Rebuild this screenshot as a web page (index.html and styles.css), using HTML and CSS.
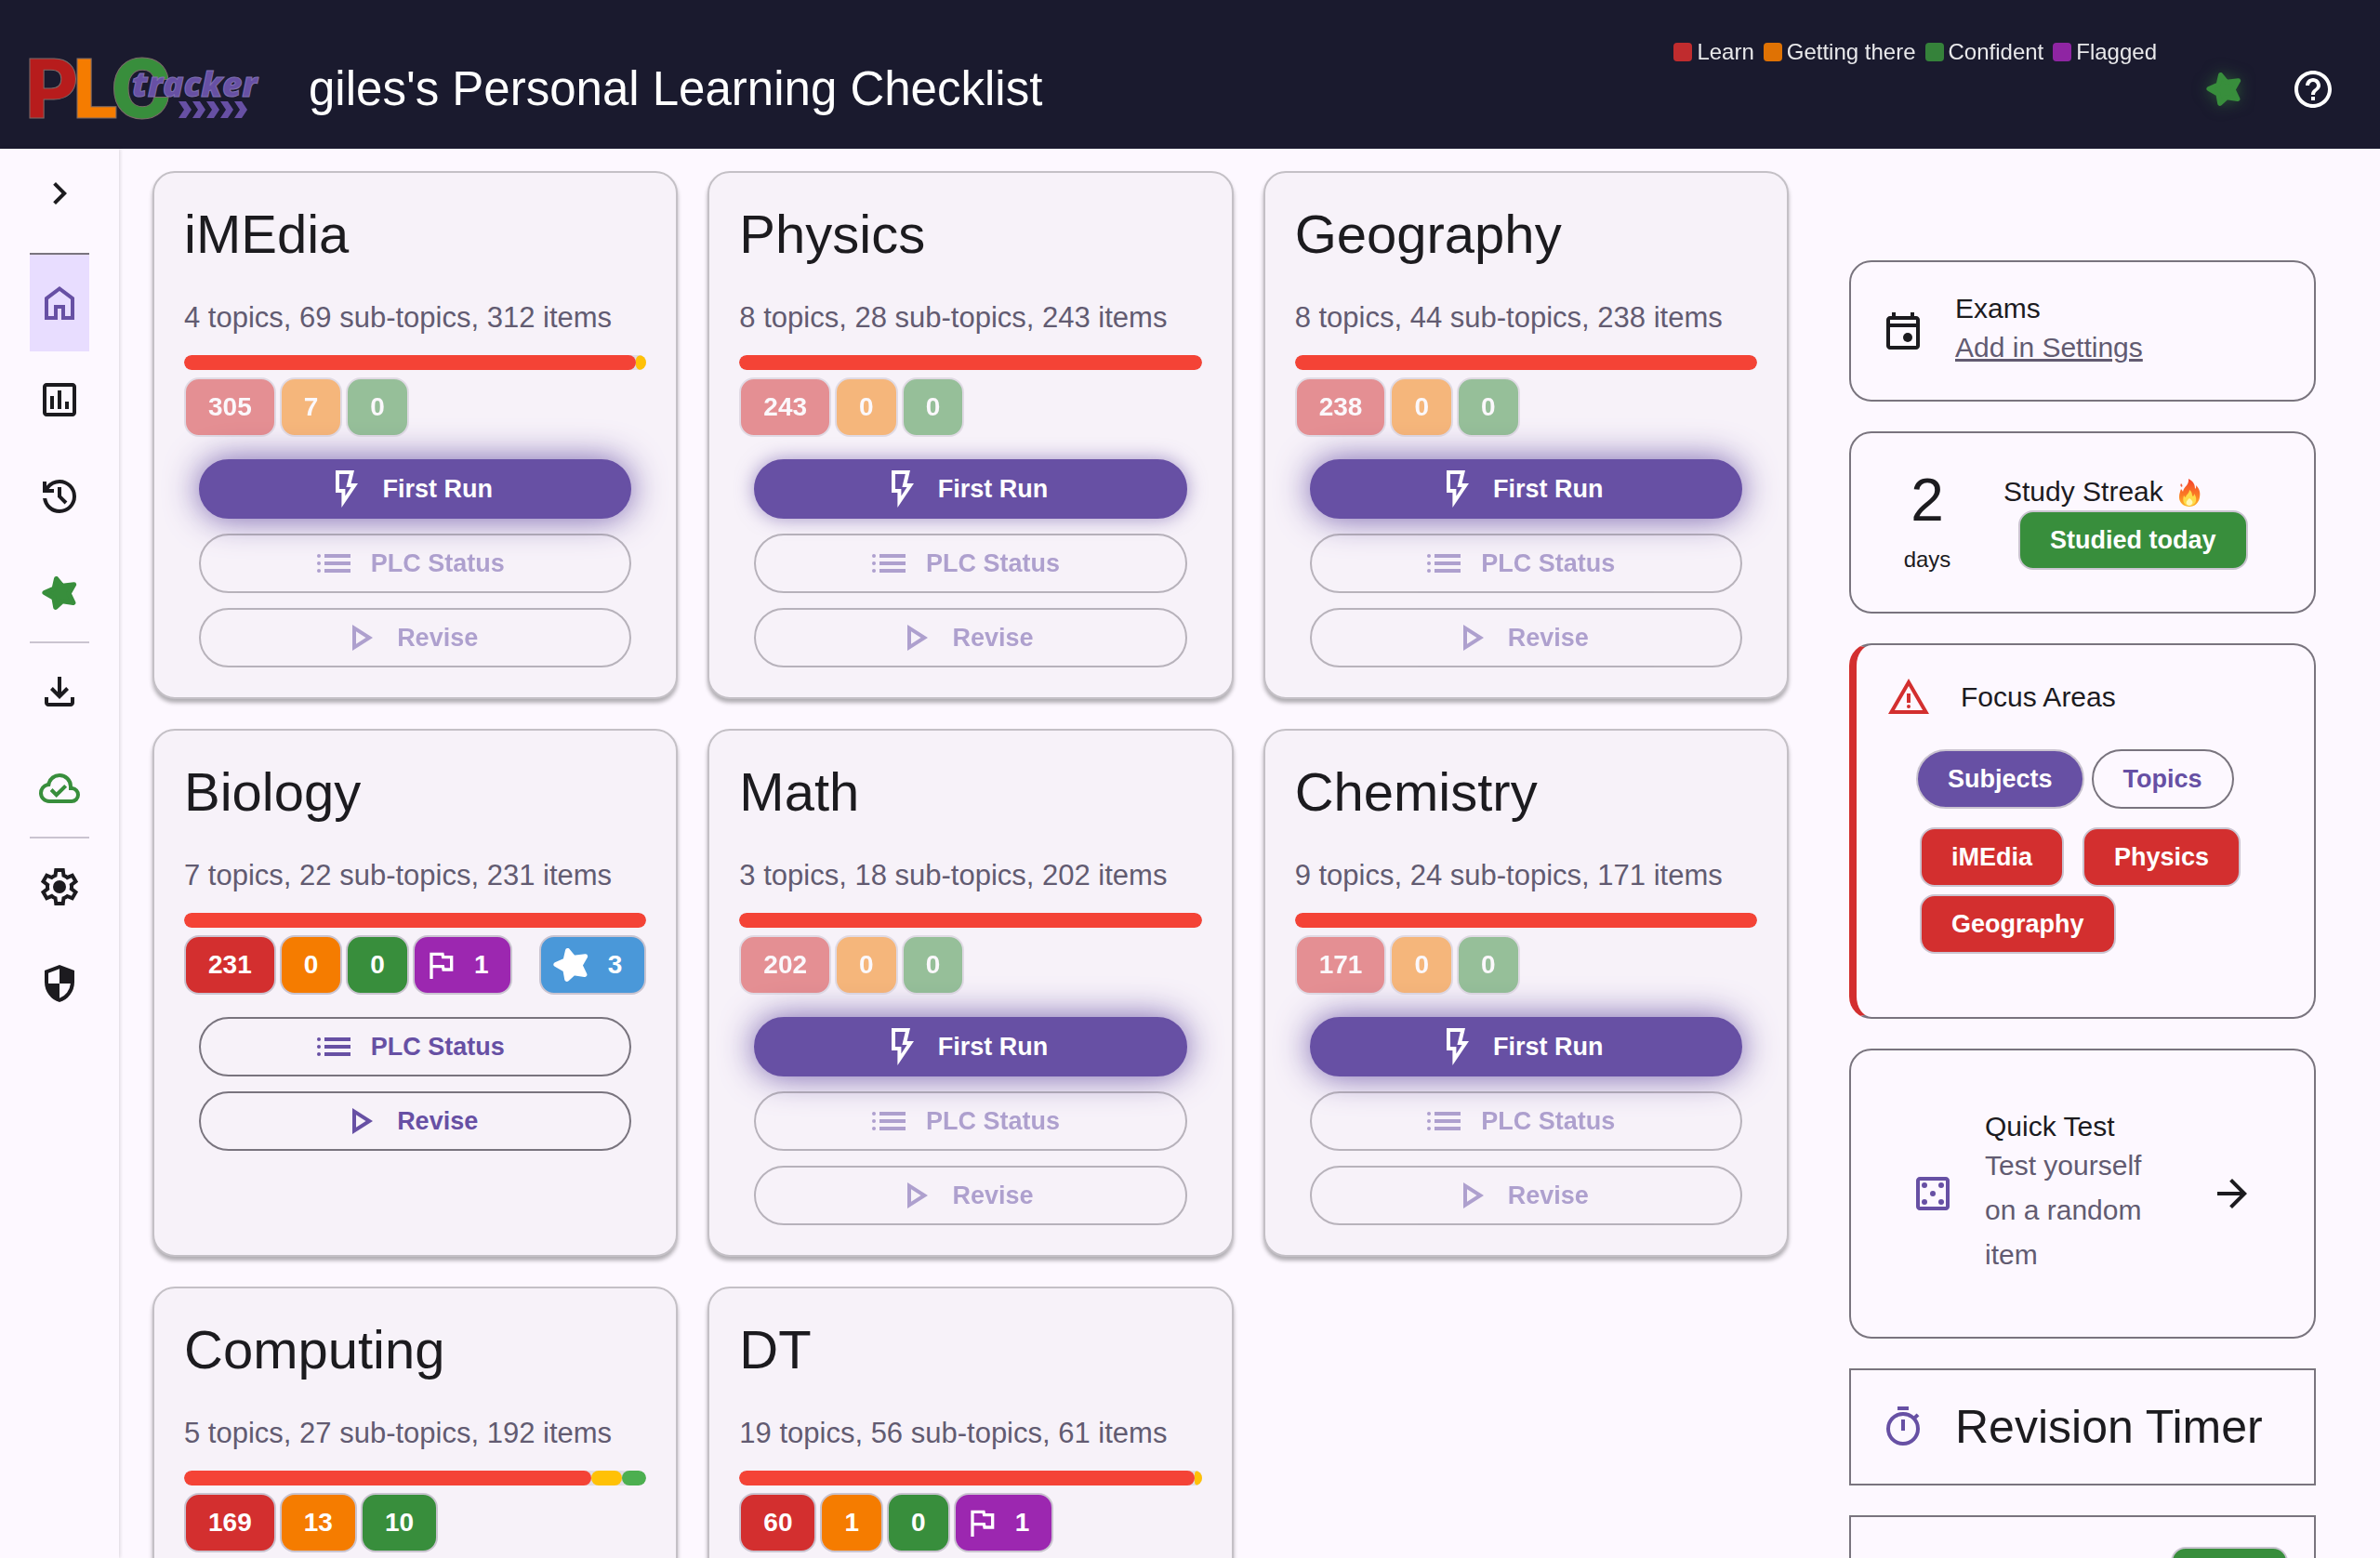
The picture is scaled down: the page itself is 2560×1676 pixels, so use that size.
FILE: index.html
```html
<!DOCTYPE html>
<html lang="en">
<head>
    <meta charset="UTF-8">
    <meta name="viewport" content="width=device-width, initial-scale=1.0">
    <title>PLC Tracker</title>
    <link rel="stylesheet" href="styles.css">
</head>
<body>

    <!-- Icon sprite -->
    <svg class="sprite" aria-hidden="true">
        <symbol id="i-chevron" viewBox="0 0 24 24"><path d="M8.6 16.6 13.2 12 8.6 7.4 10 6l6 6-6 6z"/></symbol>
        <symbol id="i-home" viewBox="0 0 24 24"><path d="M6 19h3v-6h6v6h3v-9l-6-4.5L6 10zm-2 2V9l8-6 8 6v12h-7v-6h-2v6z"/></symbol>
        <symbol id="i-chart" viewBox="0 0 24 24"><path d="M7 17h2v-7H7zm4 0h2V7h-2zm4 0h2v-4h-2zM5 21q-.8 0-1.4-.6T3 19V5q0-.8.6-1.4T5 3h14q.8 0 1.400.6T21 5v14q0 .8-.6 1.4T19 21zm0-2h14V5H5z"/></symbol>
        <symbol id="i-history" viewBox="0 0 24 24"><path d="M12 21q-3.450 0-6.013-2.287T3.050 13H5.100q.35 2.600 2.313 4.300T12 19q2.925 0 4.963-2.037T19 12q0-2.925-2.037-4.963T12 5q-1.725 0-3.225.8T6.250 8H9v2H3V4h2v2.350q1.275-1.600 3.113-2.475T12 3q1.875 0 3.513.713t2.850 1.924 1.925 2.850T21 12q0 1.875-.712 3.513t-1.925 2.850-2.850 1.925T12 21m2.800-4.800L11 12.400V7h2v4.600l3.200 3.200z"/></symbol>
        <symbol id="i-star" viewBox="0 0 24 24"><path d="M10.300 4.300 13.500 8.200 19.800 7.400 17 12.200 19.400 17.200 13.600 16.300 9.900 19.600 9 14.600 4 11.800 9.100 9.500z" stroke="currentColor" stroke-width="2.600" stroke-linejoin="round"/></symbol>
        <symbol id="i-download" viewBox="0 0 24 24"><path d="m12 16-5-5 1.400-1.450 2.600 2.600V4h2v8.150l2.600-2.600L17 11zm-6 4q-.8 0-1.400-.6T4 18v-3h2v3h12v-3h2v3q0 .8-.6 1.400T18 20z"/></symbol>
        <symbol id="i-cloud" viewBox="0 0 24 24"><path d="m10.350 17 5.700-5.650-1.450-1.400-4.250 4.200-2.100-2.100L6.850 13.500zM6.500 20q-2.275 0-3.887-1.575T1 14.575q0-1.950 1.175-3.475T5.250 9.150q.625-2.300 2.500-3.725T12 4q2.925 0 4.963 2.038T19 11q1.725.2 2.863 1.488T23 15.500q0 1.875-1.312 3.188T18.500 20zm0-2h12q1.050 0 1.775-.725T21 15.500t-.725-1.775T18.500 13H17v-2q0-2.075-1.463-3.537T12 6 8.463 7.463 7 11h-.5q-1.450 0-2.475 1.025T3 14.500t1.025 2.475T6.500 18"/></symbol>
        <symbol id="i-settings" viewBox="0 0 24 24"><path fill-rule="evenodd" d="m9.250 22-.4-3.200q-.325-.125-.612-.3t-.563-.375L4.700 19.375l-2.750-4.750 2.575-1.950Q4.500 12.500 4.500 12.338v-.675q0-.163.025-.338L1.950 9.375l2.750-4.750 2.975 1.250q.275-.2.575-.375t.6-.3l.4-3.200h5.500l.4 3.200q.325.125.613.3t.562.375l2.975-1.250 2.750 4.750-2.575 1.950q.025.175.025.338v.674q0 .163-.05.338l2.575 1.950-2.750 4.750-2.950-1.250q-.275.2-.575.375t-.6.3l-.4 3.200zM11 20h1.975l.35-2.650q.775-.2 1.438-.587t1.212-.938l2.475 1.025.975-1.700-2.150-1.625q.125-.35.175-.737T17.500 12t-.05-.787-.175-.738l2.150-1.625-.975-1.700-2.475 1.050q-.55-.575-1.212-.962t-1.438-.588L13 4h-1.975l-.35 2.650q-.775.2-1.437.588t-1.213.937L5.550 7.150l-.975 1.700 2.150 1.600q-.125.375-.175.750t-.05.8q0 .4.050.775t.175.750l-2.150 1.625.975 1.700 2.475-1.050q.55.575 1.213.963t1.437.587z"/><circle cx="12" cy="12" r="3.500"/></symbol>
        <symbol id="i-shield" viewBox="0 0 24 24"><path fill-rule="evenodd" d="M12 22q-3.475-.875-5.737-3.987T4 11.100V5l8-3 8 3v6.100q0 3.800-2.262 6.913T12 22m0-2.100q2.425-.75 4.050-2.963T17.950 12H12V4.125l-6 2.250v5.175L6.050 12H12z"/></symbol>
        <symbol id="i-help" viewBox="0 0 24 24"><path d="M11 18h2v-2h-2zm1-16C6.480 2 2 6.480 2 12s4.480 10 10 10 10-4.480 10-10S17.520 2 12 2m0 18c-4.410 0-8-3.590-8-8s3.590-8 8-8 8 3.590 8 8-3.590 8-8 8m0-14c-2.210 0-4 1.790-4 4h2c0-1.100.9-2 2-2s2 .9 2 2c0 2-3 1.750-3 5h2c0-2.250 3-2.500 3-5 0-2.210-1.790-4-4-4"/></symbol>
        <symbol id="i-bolt" viewBox="0 0 24 24"><path fill-rule="evenodd" d="M7 2h10l-1.700 7H19l-8.800 13v-8H7zM9 4v8h3.200v3.700l3.100-4.700h-2.600l1.700-7z"/></symbol>
        <symbol id="i-list" viewBox="0 0 24 24"><path d="M7 9V7h14v2zm0 4v-2h14v2zm0 4v-2h14v2z"/><circle cx="4" cy="8" r="1"/><circle cx="4" cy="12" r="1"/><circle cx="4" cy="16" r="1"/></symbol>
        <symbol id="i-play" viewBox="0 0 24 24"><path fill-rule="evenodd" d="M8 5v14l11-7zm2 3.650L15.250 12 10 15.350z"/></symbol>
        <symbol id="i-flag" viewBox="0 0 24 24"><path fill-rule="evenodd" d="M5 21V4h9l.4 2H20v10h-7l-.4-2H7v7zm9.650-7H18V8h-5.250l-.4-2H7v6h7.250z"/></symbol>
        <symbol id="i-calendar" viewBox="0 0 24 24"><path fill-rule="evenodd" d="M5 22q-.8 0-1.400-.6T3 20V6q0-.8.6-1.400T5 4h1V2h2v2h8V2h2v2h1q.8 0 1.400.6T21 6v14q0 .8-.6 1.400T19 22zm0-2h14V10H5zM5 8h14V6H5z"/><circle cx="14.500" cy="15.500" r="2.500"/></symbol>
        <symbol id="i-warning" viewBox="0 0 24 24"><path fill-rule="evenodd" d="M1 21 12 2l11 19zm3.450-2h15.100L12 6z"/><path d="M11 10h2v5h-2z"/><circle cx="12" cy="17" r="1"/></symbol>
        <symbol id="i-dice" viewBox="0 0 24 24"><path fill-rule="evenodd" d="M5 21q-.8 0-1.400-.6T3 19V5q0-.8.6-1.400T5 3h14q.8 0 1.400.6T21 5v14q0 .8-.6 1.400T19 21zm0-2h14V5H5z"/><circle cx="7.500" cy="7.500" r="1.500"/><circle cx="16.500" cy="7.500" r="1.500"/><circle cx="12" cy="12" r="1.500"/><circle cx="7.500" cy="16.500" r="1.500"/><circle cx="16.500" cy="16.500" r="1.500"/></symbol>
        <symbol id="i-arrow" viewBox="0 0 24 24"><path d="M16.175 13H4v-2h12.175l-5.600-5.600L12 4l8 8-8 8-1.425-1.400z"/></symbol>
        <symbol id="i-timer" viewBox="0 0 24 24"><path d="M9 3V1h6v2zm2 11h2V8h-2z"/><path d="m18.300 7.100 1.700-1.700" fill="none" stroke="currentColor" stroke-width="2"/><circle cx="12" cy="13" r="8" fill="none" stroke="currentColor" stroke-width="2"/></symbol>
        <symbol id="i-fire" viewBox="0 0 24 30">
            <linearGradient id="flame" x1="0" y1="0" x2="0" y2="1">
                <stop offset="0" stop-color="#f4402c"/>
                <stop offset=".6" stop-color="#fb7d24"/>
                <stop offset="1" stop-color="#fdb728"/>
            </linearGradient>
            <path fill="url(#flame)" d="M11 0c6 3 7 7 7 11 1-1 1.500-2 1-4 4 4 5 8 4 13-1 6-5 10-11 10S1 26 1 20c0-4 1-6 2-9 1 1 1.500 2 2 3C6 8 12 7 11 0z"/>
            <path fill="#f4603c" d="M3 5c1 1 2 2 1 4C2 8 2 7 3 5z"/>
            <path fill="#fedb4a" d="M12 12c4 3 2 6 4 7 1-1 1-2 1-3 5 7 1 13-5 13S4 24 6 18c1 1 1 2 2 2 0-3 4-4 4-8z"/>
            <path fill="#fff8b8" d="M12 21c5 3 4 7 0 8-5-1-4-5 0-8z"/>
        </symbol>
    </svg>

    <header class="top-bar">
        <svg class="logo" viewBox="0 0 252 66" role="img" aria-label="PLC tracker">
            <g class="logo-letters">
                <text x="-5" y="64" fill="#b71c1c">P</text>
                <text x="46" y="64" fill="#f57c00">L</text>
                <text x="87" y="64" fill="#388e3c">C</text>
            </g>
            <text class="logo-word" x="110" y="41">tracker</text>
            <g class="logo-arrows">
                <path d="M160 46h8l6 9-6 9h-8l6-9z"/>
                <path d="M175 46h8l6 9-6 9h-8l6-9z"/>
                <path d="M190 46h8l6 9-6 9h-8l6-9z"/>
                <path d="M205 46h8l6 9-6 9h-8l6-9z"/>
                <path d="M220 46h8l6 9-6 9h-8l6-9z"/>
            </g>
        </svg>
        <h1>giles's Personal Learning Checklist</h1>
        <ul class="legend">
            <li><span class="swatch learn"></span>Learn</li>
            <li><span class="swatch getting"></span>Getting there</li>
            <li><span class="swatch confident"></span>Confident</li>
            <li><span class="swatch flagged"></span>Flagged</li>
        </ul>
        <button class="icon-btn star-glow" aria-label="Stars"><svg class="icon"><use href="#i-star"/></svg></button>
        <button class="icon-btn" aria-label="Help"><svg class="icon"><use href="#i-help"/></svg></button>
    </header>

    <div class="layout">
        <!-- Side navigation -->
        <nav class="side-nav">
            <button class="icon-btn nav-toggle" aria-label="Expand menu"><svg class="icon"><use href="#i-chevron"/></svg></button>
            <div class="nav-group nav-main">
                <a href="#home" class="active" aria-label="Home"><svg class="icon"><use href="#i-home"/></svg></a>
                <a href="#stats" aria-label="Statistics"><svg class="icon"><use href="#i-chart"/></svg></a>
                <a href="#history" aria-label="History"><svg class="icon"><use href="#i-history"/></svg></a>
                <a href="#stars" class="green" aria-label="Stars"><svg class="icon"><use href="#i-star"/></svg></a>
            </div>
            <div class="nav-group">
                <a href="#download" aria-label="Download"><svg class="icon"><use href="#i-download"/></svg></a>
                <a href="#sync" class="green" aria-label="Synced"><svg class="icon"><use href="#i-cloud"/></svg></a>
            </div>
            <div class="nav-group">
                <a href="#settings" aria-label="Settings"><svg class="icon"><use href="#i-settings"/></svg></a>
                <a href="#privacy" aria-label="Privacy"><svg class="icon"><use href="#i-shield"/></svg></a>
            </div>
        </nav>

        <div class="content">
            <!-- Subjects -->
            <main class="subjects">
                <article class="subject">
                    <h2>iMEdia</h2>
                    <p>4 topics, 69 sub-topics, 312 items</p>
                    <div class="progress">
                        <span class="bar-red" style="width: 97.8%"></span>
                        <span class="bar-amber" style="width: 2.2%"></span>
                    </div>
                    <div class="counts">
                        <button class="chip learn" disabled>305</button>
                        <button class="chip getting" disabled>7</button>
                        <button class="chip confident" disabled>0</button>
                    </div>
                    <div class="actions">
                        <button class="btn first-run"><svg class="icon"><use href="#i-bolt"/></svg>First Run</button>
                        <button class="btn" disabled><svg class="icon"><use href="#i-list"/></svg>PLC Status</button>
                        <button class="btn" disabled><svg class="icon"><use href="#i-play"/></svg>Revise</button>
                    </div>
                </article>

                <article class="subject">
                    <h2>Physics</h2>
                    <p>8 topics, 28 sub-topics, 243 items</p>
                    <div class="progress">
                        <span class="bar-red" style="width: 100%"></span>
                    </div>
                    <div class="counts">
                        <button class="chip learn" disabled>243</button>
                        <button class="chip getting" disabled>0</button>
                        <button class="chip confident" disabled>0</button>
                    </div>
                    <div class="actions">
                        <button class="btn first-run soft-glow"><svg class="icon"><use href="#i-bolt"/></svg>First Run</button>
                        <button class="btn" disabled><svg class="icon"><use href="#i-list"/></svg>PLC Status</button>
                        <button class="btn" disabled><svg class="icon"><use href="#i-play"/></svg>Revise</button>
                    </div>
                </article>

                <article class="subject">
                    <h2>Geography</h2>
                    <p>8 topics, 44 sub-topics, 238 items</p>
                    <div class="progress">
                        <span class="bar-red" style="width: 100%"></span>
                    </div>
                    <div class="counts">
                        <button class="chip learn" disabled>238</button>
                        <button class="chip getting" disabled>0</button>
                        <button class="chip confident" disabled>0</button>
                    </div>
                    <div class="actions">
                        <button class="btn first-run"><svg class="icon"><use href="#i-bolt"/></svg>First Run</button>
                        <button class="btn" disabled><svg class="icon"><use href="#i-list"/></svg>PLC Status</button>
                        <button class="btn" disabled><svg class="icon"><use href="#i-play"/></svg>Revise</button>
                    </div>
                </article>

                <article class="subject">
                    <h2>Biology</h2>
                    <p>7 topics, 22 sub-topics, 231 items</p>
                    <div class="progress">
                        <span class="bar-red" style="width: 100%"></span>
                    </div>
                    <div class="counts">
                        <button class="chip learn">231</button>
                        <button class="chip getting">0</button>
                        <button class="chip confident">0</button>
                        <button class="chip flagged with-icon"><svg class="icon icon-flag"><use href="#i-flag"/></svg>1</button>
                        <button class="chip stars with-icon"><svg class="icon"><use href="#i-star"/></svg>3</button>
                    </div>
                    <div class="actions">
                        <button class="btn"><svg class="icon"><use href="#i-list"/></svg>PLC Status</button>
                        <button class="btn"><svg class="icon"><use href="#i-play"/></svg>Revise</button>
                    </div>
                </article>

                <article class="subject">
                    <h2>Math</h2>
                    <p>3 topics, 18 sub-topics, 202 items</p>
                    <div class="progress">
                        <span class="bar-red" style="width: 100%"></span>
                    </div>
                    <div class="counts">
                        <button class="chip learn" disabled>202</button>
                        <button class="chip getting" disabled>0</button>
                        <button class="chip confident" disabled>0</button>
                    </div>
                    <div class="actions">
                        <button class="btn first-run"><svg class="icon"><use href="#i-bolt"/></svg>First Run</button>
                        <button class="btn" disabled><svg class="icon"><use href="#i-list"/></svg>PLC Status</button>
                        <button class="btn" disabled><svg class="icon"><use href="#i-play"/></svg>Revise</button>
                    </div>
                </article>

                <article class="subject">
                    <h2>Chemistry</h2>
                    <p>9 topics, 24 sub-topics, 171 items</p>
                    <div class="progress">
                        <span class="bar-red" style="width: 100%"></span>
                    </div>
                    <div class="counts">
                        <button class="chip learn" disabled>171</button>
                        <button class="chip getting" disabled>0</button>
                        <button class="chip confident" disabled>0</button>
                    </div>
                    <div class="actions">
                        <button class="btn first-run"><svg class="icon"><use href="#i-bolt"/></svg>First Run</button>
                        <button class="btn" disabled><svg class="icon"><use href="#i-list"/></svg>PLC Status</button>
                        <button class="btn" disabled><svg class="icon"><use href="#i-play"/></svg>Revise</button>
                    </div>
                </article>

                <article class="subject">
                    <h2>Computing</h2>
                    <p>5 topics, 27 sub-topics, 192 items</p>
                    <div class="progress">
                        <span class="bar-red" style="width: 88%"></span>
                        <span class="bar-amber" style="width: 6.8%"></span>
                        <span class="bar-green" style="width: 5.2%"></span>
                    </div>
                    <div class="counts">
                        <button class="chip learn">169</button>
                        <button class="chip getting">13</button>
                        <button class="chip confident">10</button>
                    </div>
                </article>

                <article class="subject">
                    <h2>DT</h2>
                    <p>19 topics, 56 sub-topics, 61 items</p>
                    <div class="progress">
                        <span class="bar-red" style="width: 98.4%"></span>
                        <span class="bar-amber" style="width: 1.6%"></span>
                    </div>
                    <div class="counts">
                        <button class="chip learn">60</button>
                        <button class="chip getting">1</button>
                        <button class="chip confident">0</button>
                        <button class="chip flagged with-icon"><svg class="icon icon-flag"><use href="#i-flag"/></svg>1</button>
                    </div>
                </article>
            </main>

            <!-- Widgets -->
            <aside class="widgets">
                <section class="widget">
                    <svg class="icon"><use href="#i-calendar"/></svg>
                    <div>
                        <h3>Exams</h3>
                        <a href="#settings">Add in Settings</a>
                    </div>
                </section>

                <section class="widget">
                    <div class="streak-count">
                        <strong>2</strong>
                        <span>days</span>
                    </div>
                    <div class="streak-info">
                        <h3>Study Streak <svg class="fire" role="img" aria-label="fire"><use href="#i-fire"/></svg></h3>
                        <button class="chip label-chip confident">Studied today</button>
                    </div>
                </section>

                <section class="widget focus">
                    <div class="focus-title">
                        <svg class="icon red"><use href="#i-warning"/></svg>
                        <h3>Focus Areas</h3>
                    </div>
                    <div class="tabs">
                        <button class="tab selected">Subjects</button>
                        <button class="tab">Topics</button>
                    </div>
                    <div class="focus-list">
                        <button class="chip label-chip learn">iMEdia</button>
                        <button class="chip label-chip learn">Physics</button>
                        <button class="chip label-chip learn">Geography</button>
                    </div>
                </section>

                <section class="widget quick-test">
                    <svg class="icon purple"><use href="#i-dice"/></svg>
                    <div class="quick-text">
                        <h3>Quick Test</h3>
                        <p>Test yourself on a random item</p>
                    </div>
                    <button class="icon-btn" aria-label="Start quick test"><svg class="icon"><use href="#i-arrow"/></svg></button>
                </section>

                <section class="widget square">
                    <svg class="icon purple"><use href="#i-timer"/></svg>
                    <h2>Revision Timer</h2>
                </section>

                <section class="widget square timer-controls">
                    <button class="chip timer-start confident" aria-label="Start timer"></button>
                </section>
            </aside>
        </div>
    </div>

</body>
</html>
```

FILE: styles.css
```css
:root {
    --primary: #6750a4;
    --surface: #fdf8ff;
    --card: #f7f2f9;
    --text: #1c1b1f;
    --muted: #625b71;
    --outline: #79747e;
    --outline-light: #cac4d0;
    --red: #d32f2f;
    --orange: #f57c00;
    --green: #388e3c;
    --purple: #9c27b0;
}

* {
    margin: 0;
    padding: 0;
    box-sizing: border-box;
}

body {
    display: flex;
    flex-direction: column;
    height: 100vh;
    overflow: hidden;
    background-color: var(--surface);
    color: var(--text);
    font-family: "Liberation Sans", Arial, Helvetica, sans-serif;
    font-size: 30px;
}

h1,
h2,
h3 {
    font-weight: 400;
}

button {
    border: none;
    background: none;
    color: inherit;
    font-family: inherit;
    cursor: pointer;
}

.sprite {
    position: absolute;
    width: 0;
    height: 0;
}

.icon {
    display: block;
    flex: none;
    width: 48px;
    height: 48px;
    fill: currentColor;
}

.icon-btn {
    display: flex;
    align-items: center;
    justify-content: center;
}

.green {
    color: var(--green);
}

.red {
    color: var(--red);
}

.purple {
    color: var(--primary);
}

/* Header */
.top-bar {
    display: flex;
    align-items: center;
    gap: 48px;
    flex: none;
    height: 160px;
    padding: 32px 48px 0 32px;
    background-color: #1a1a2e;
    color: white;
}

.logo {
    flex: none;
    width: 252px;
    height: 66px;
    overflow: visible;
}

.logo-letters {
    font-family: Inter, "Liberation Sans", sans-serif;
    font-size: 88px;
    font-weight: 800;
    stroke: #7a6a68;
    stroke-width: 1px;
}

.logo-word {
    fill: var(--primary);
    stroke: #8070b0;
    stroke-width: 1px;
    font-family: "Open Sans", "Noto Sans", sans-serif;
    font-size: 37px;
    font-style: italic;
    font-weight: 800;
}

.logo-arrows {
    fill: var(--primary);
}

.top-bar h1 {
    flex: 1;
    font-size: 51px;
    line-height: 64px;
}

.legend {
    display: flex;
    align-self: flex-start;
    gap: 10px;
    list-style: none;
    font-size: 24px;
    line-height: 48px;
    opacity: 0.9;
}

.legend li {
    display: flex;
    align-items: center;
    gap: 5px;
}

.swatch {
    width: 20px;
    height: 20px;
    border-radius: 4px;
}

.star-glow {
    color: var(--green);
    filter: drop-shadow(0 0 8px rgba(56, 142, 60, 0.5));
}

/* Fills shared by swatches and chips */
.learn {
    background-color: var(--red);
}

.getting {
    background-color: var(--orange);
}

.confident {
    background-color: var(--green);
}

.flagged {
    background-color: var(--purple);
}

.stars {
    background-color: #4a98d9;
}

/* Side navigation */
.layout {
    display: flex;
    flex: 1;
    min-height: 0;
}

.side-nav {
    flex: none;
    width: 128px;
    padding: 0 32px;
    box-shadow: 1px 0 4px rgba(0, 0, 0, 0.15);
}

.nav-toggle {
    width: 64px;
    height: 96px;
    margin-bottom: 16px;
}

.nav-group {
    border-top: 2px solid var(--outline-light);
}

.nav-main {
    border-top-color: var(--outline);
}

.nav-group a {
    display: flex;
    align-items: center;
    justify-content: center;
    height: 104px;
}

.nav-group a:not(.green) {
    color: var(--text);
}

.nav-group a.active {
    background-color: #e8ddff;
    color: var(--primary);
}

/* Content */
.content {
    flex: 1;
    display: grid;
    grid-template-columns: 1fr 502px;
    align-items: start;
    gap: 65px;
    padding: 24px 69px 24px 36px;
    overflow: auto;
    scrollbar-width: none;
}

.subjects {
    display: grid;
    grid-template-columns: repeat(3, 1fr);
    gap: 32px;
}

.subject {
    min-height: 568px;
    padding: 32px;
    border: 2px solid #c4c0c6;
    border-radius: 24px;
    background-color: var(--card);
    box-shadow: 0 4px 4px rgba(0, 0, 0, 0.3);
}

.subject h2 {
    margin-bottom: 32px;
    font-size: 58px;
    line-height: 68px;
}

.subject p {
    margin-bottom: 16px;
    color: var(--muted);
    font-size: 31px;
    line-height: 48px;
}

.progress {
    display: flex;
    height: 16px;
    margin-bottom: 8px;
    border-radius: 8px;
    background-color: #e0dce4;
    overflow: hidden;
}

.progress span {
    border-radius: 8px;
}

.bar-red {
    background-color: #f44336;
}

.bar-amber {
    background-color: #ffc107;
}

.bar-green {
    background-color: #4caf50;
}

.counts {
    display: flex;
    gap: 4px;
    margin-bottom: 24px;
}

.chip {
    display: flex;
    align-items: center;
    height: 64px;
    padding: 0 24px;
    border: 2px solid var(--outline-light);
    border-radius: 16px;
    color: white;
    font-size: 28px;
    font-weight: 700;
}

.chip.with-icon {
    gap: 16px;
    padding-left: 8px;
}

.chip.stars {
    margin-left: auto;
}

.icon-flag {
    width: 40px;
    height: 40px;
}

.label-chip {
    padding: 0 32px;
    font-size: 27px;
}

.chip:disabled,
.btn:disabled {
    opacity: 0.5;
    cursor: default;
}

.actions {
    display: flex;
    flex-direction: column;
    gap: 16px;
    padding: 0 16px;
}

.btn {
    display: flex;
    align-items: center;
    justify-content: center;
    gap: 16px;
    height: 64px;
    padding: 0 48px 0 32px;
    border: 2px solid var(--outline);
    border-radius: 32px;
    color: var(--primary);
    font-size: 27px;
    font-weight: 700;
}

.first-run {
    border-color: var(--primary);
    background-color: var(--primary);
    color: white;
    box-shadow: 0 0 36px rgba(103, 80, 164, 0.9);
}

.first-run.soft-glow {
    box-shadow: 0 0 20px rgba(103, 80, 164, 0.6);
}

/* Widgets */
.widgets {
    display: flex;
    flex-direction: column;
    gap: 32px;
    margin-top: 96px;
}

.widget {
    display: flex;
    align-items: center;
    gap: 32px;
    padding: 32px;
    border: 2px solid var(--outline);
    border-radius: 24px;
}

.widget h3 {
    font-size: 30px;
    line-height: 36px;
}

.widget p,
.widget a {
    color: var(--muted);
    line-height: 48px;
}

.streak-count {
    display: flex;
    flex-direction: column;
    width: 100px;
    text-align: center;
}

.streak-count strong {
    font-size: 64px;
    font-weight: 400;
    line-height: 80px;
}

.streak-count span {
    font-size: 24px;
    line-height: 48px;
}

.streak-info h3 {
    margin-bottom: 2px;
}

.streak-info .chip {
    margin-left: 16px;
}

.fire {
    width: 24px;
    height: 30px;
    margin-left: 8px;
    vertical-align: -6px;
}

.focus {
    flex-direction: column;
    align-items: stretch;
    gap: 0;
    padding-bottom: 68px;
    border-left: 8px solid var(--red);
}

.focus-title {
    display: flex;
    align-items: center;
    gap: 32px;
    margin-bottom: 32px;
}

.tabs {
    display: flex;
    gap: 8px;
    margin-bottom: 20px;
    padding-left: 32px;
}

.tab {
    height: 64px;
    padding: 0 32px;
    border: 2px solid var(--outline);
    border-radius: 32px;
    color: var(--primary);
    font-size: 27px;
    font-weight: 700;
}

.tab.selected {
    border-color: var(--outline-light);
    background-color: var(--primary);
    color: white;
}

.focus-list {
    display: flex;
    flex-wrap: wrap;
    gap: 8px 20px;
    padding-left: 36px;
}

.quick-test {
    padding: 64px;
}

.quick-text {
    flex: 1;
    padding-right: 16px;
}

.square {
    border-radius: 0;
}

.widget h2 {
    font-size: 50px;
    line-height: 58px;
}

.timer-controls {
    align-items: flex-start;
    justify-content: flex-end;
    min-height: 240px;
    padding-right: 28px;
}

.timer-start {
    width: 126px;
}
```
